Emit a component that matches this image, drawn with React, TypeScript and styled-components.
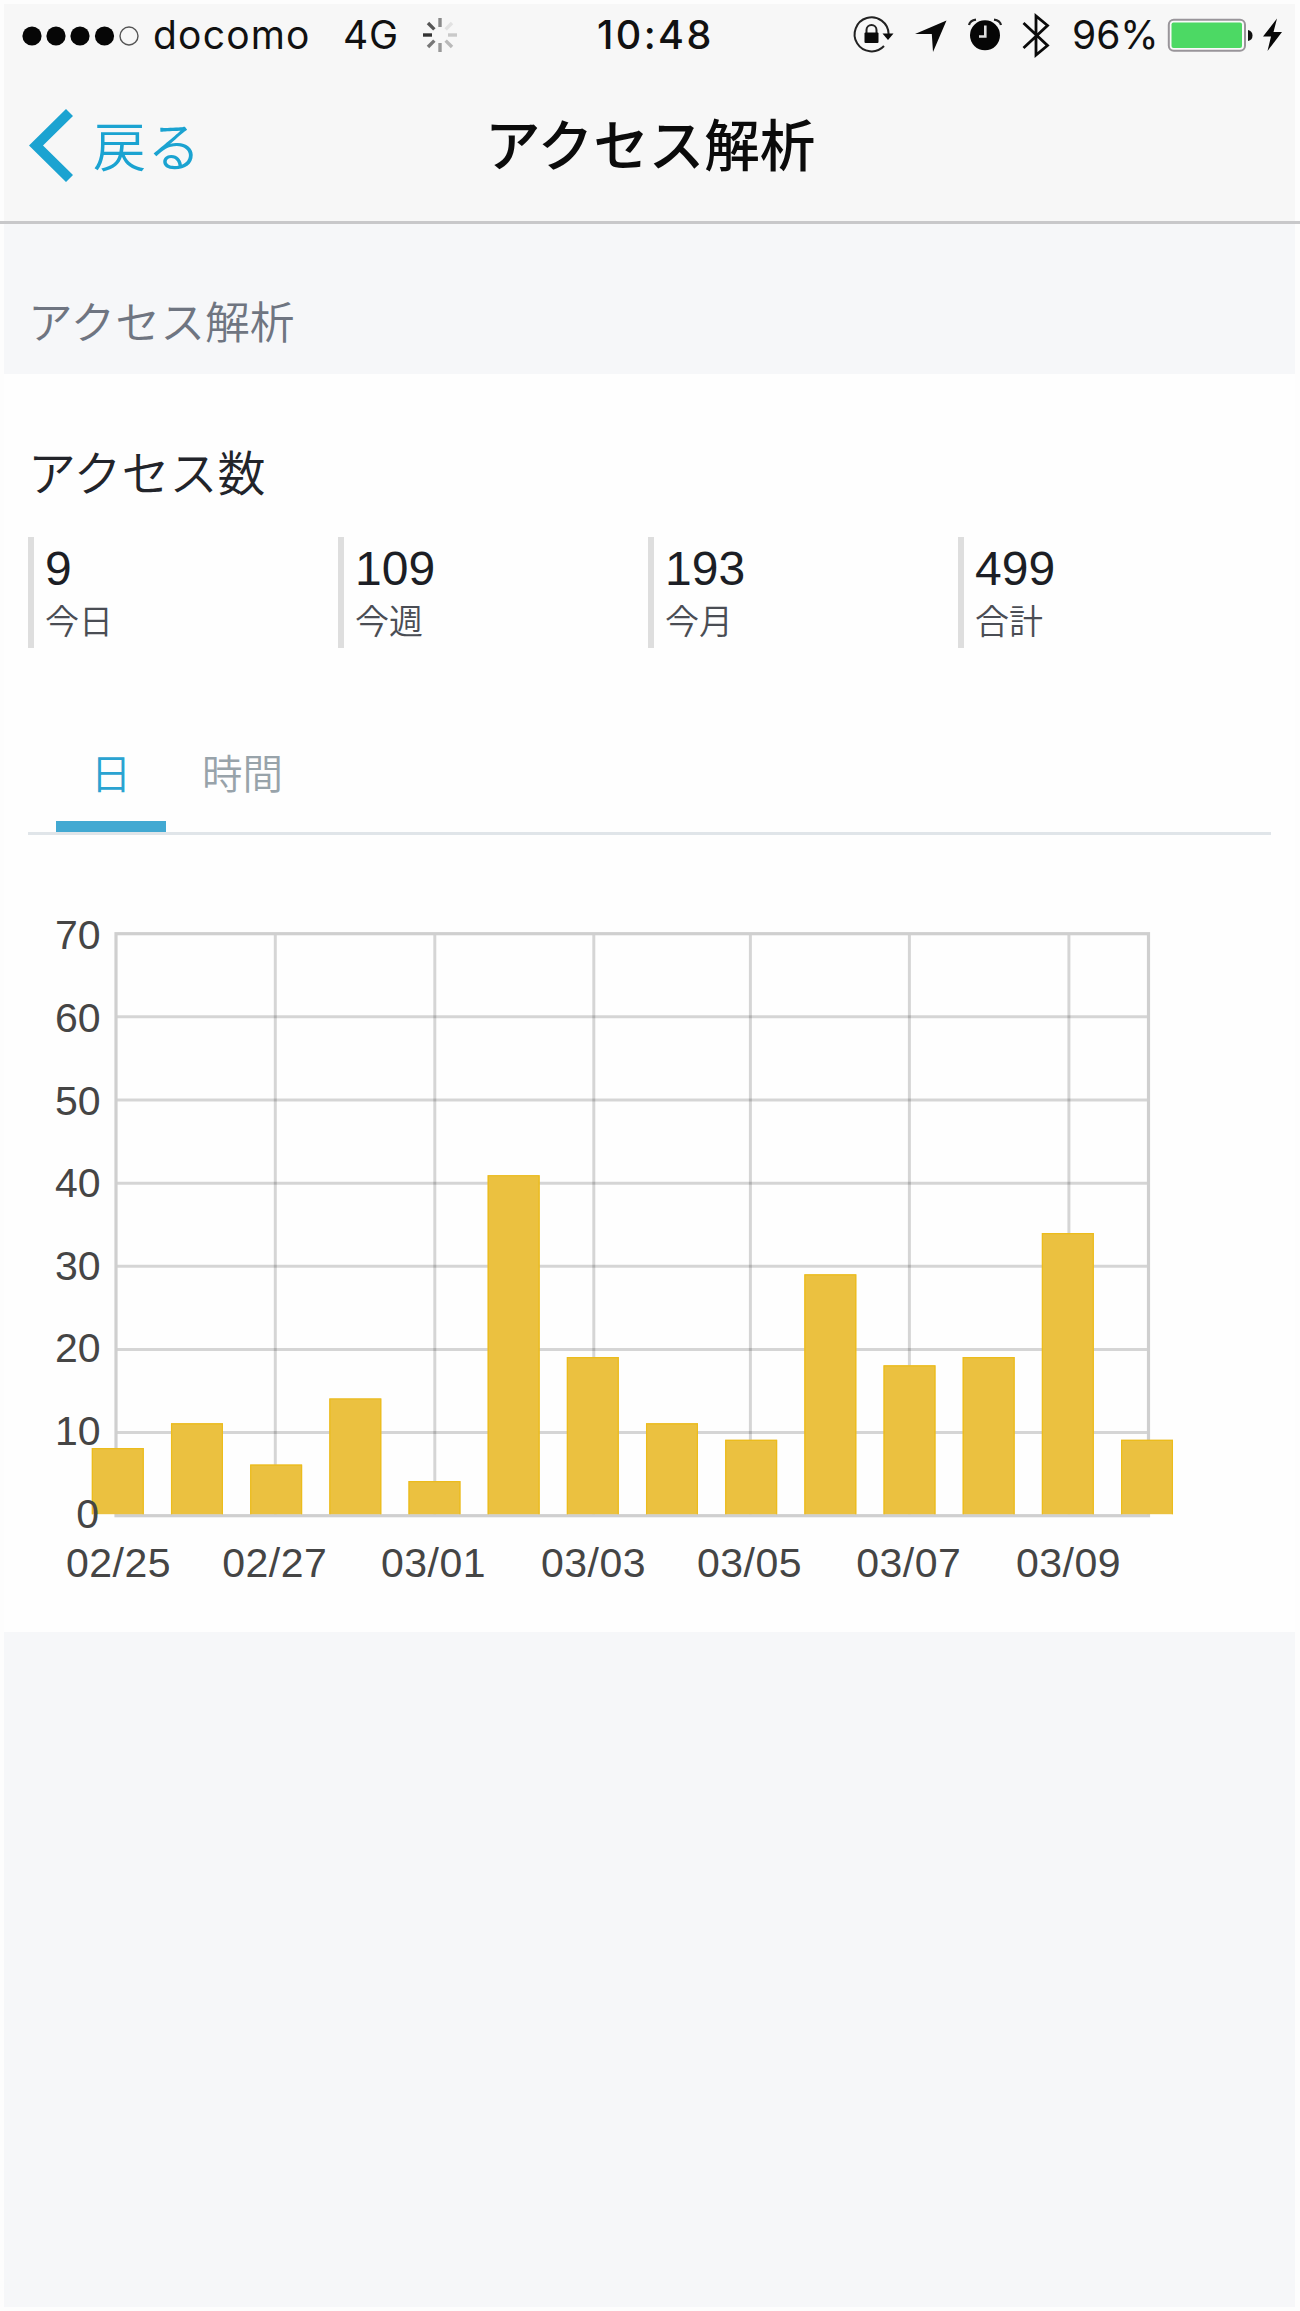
import React from "react";
import styled, { createGlobalStyle } from "styled-components";

const GlobalStyle = createGlobalStyle`
  html, body { margin: 0; padding: 0; background: #fdfdfd; }
  * { box-sizing: border-box; }
`;

const JP = `"Noto Sans CJK JP", sans-serif`;
const LATIN = `"Liberation Sans", Arial, sans-serif`;
const UI = `Inter, "Liberation Sans", sans-serif`;

const Screen = styled.div`
  width: 1300px;
  height: 2311px;
  padding: 4px 5px 4px 4px;
  display: flex;
  flex-direction: column;
  overflow: hidden;
  background: #fdfdfd;
`;

const Header = styled.header`
  flex: none;
  height: 220px;
  margin: 0 -5px 0 -4px;
  padding: 0 5px 0 4px;
  border-bottom: 3px solid #c8c8ca;
  background: linear-gradient(#f7f7f7, #f7f7f7) content-box;
`;

const StatusBar = styled.div`
  height: 62px;
  display: grid;
  grid-template-columns: 586px 130px 1fr;
  align-items: center;
  color: #111;
`;

const StatusSide = styled.div<{ $end?: boolean }>`
  display: flex;
  align-items: center;
  justify-content: ${(p) => (p.$end ? "flex-end" : "flex-start")};
  padding: ${(p) => (p.$end ? "0 13px 0 0" : "0 0 0 18px")};
`;

const StatusText = styled.span<{ $width: number; $size?: number; $spacing?: number; $ml?: number; $weight?: number }>`
  flex: none;
  width: ${(p) => p.$width}px;
  margin-left: ${(p) => p.$ml ?? 0}px;
  font: ${(p) => p.$weight ?? 400} ${(p) => p.$size ?? 39}px/50px ${UI};
  letter-spacing: ${(p) => p.$spacing ?? 0}px;
  white-space: nowrap;
`;

const Glyph = styled.svg<{ $ml?: number }>`
  flex: none;
  display: block;
  overflow: visible;
  margin-left: ${(p) => p.$ml ?? 0}px;
`;

const NavBar = styled.nav`
  height: 155px;
  padding-left: 25px;
  display: grid;
  grid-template-columns: 456px 1fr;
  align-items: start;
`;

const BackButton = styled.a`
  display: flex;
  align-items: flex-start;
  padding-top: 43px;
  color: #1ba3d1;
`;

const BackLabel = styled.span`
  margin: -1px 0 0 20px;
  font: 350 53px/73px ${JP};
  letter-spacing: 1.5px;
`;

const Title = styled.h1`
  margin: 39px 0 0;
  font: 500 55.5px/74px ${JP};
  color: #0b0b0b;
  white-space: nowrap;
`;

const SectionHeader = styled.div`
  flex: none;
  height: 150px;
  padding: 64px 0 0 24px;
  background: #f6f7f9;
  font: 350 44.8px/64px ${JP};
  color: #6f7581;
`;

const Panel = styled.section`
  flex: none;
  height: 1258px;
  padding: 0 24px;
  background: #fefefe;
`;

const PanelTitle = styled.h2`
  margin: 0;
  padding: 62px 0 0;
  height: 163px;
  font: 350 48px/68px ${JP};
  color: #22242a;
`;

const Stats = styled.div`
  display: grid;
  grid-template-columns: repeat(4, 310px);
  height: 111px;
`;

const Stat = styled.div`
  padding: 2px 0 0 11px;
  border-left: 6.5px solid #dedede;
`;

const StatValue = styled.div`
  font: 400 48px/60px ${LATIN};
  color: #1c1e25;
`;

const StatLabel = styled.div`
  margin-top: 1px;
  font: 350 34px/40px ${JP};
  color: #4a4d54;
`;

const Tabs = styled.div`
  display: flex;
  height: 187px;
  padding: 87px 0 0 28px;
  border-bottom: 3px solid #e0e5e9;
`;

const Tab = styled.div<{ $active?: boolean }>`
  width: ${(p) => (p.$active ? 110 : 153)}px;
  height: 97px;
  padding-top: 8px;
  text-align: center;
  font: 350 40.5px/58px ${JP};
  color: ${(p) => (p.$active ? "#2aa3d1" : "#98a3aa")};
  border-bottom: 11px solid ${(p) => (p.$active ? "#42a9d2" : "transparent")};
`;

const ChartSvg = styled.svg`
  display: block;
  margin-left: -28px;
  text {
    font: 400 41px ${LATIN};
    fill: #454545;
  }
`;

const Footer = styled.div`
  flex: 1;
  background: #f6f7f9;
`;

const values = [8, 11, 6, 14, 4, 41, 19, 11, 9, 29, 18, 19, 34, 9];
const yLabels = [70, 60, 50, 40, 30, 20, 10, 0];
const columns = [275.3, 434.8, 593.8, 750.4, 909.4, 1068.9];
const xLabels: [string, number][] = [
  ["02/25", 118.5],
  ["02/27", 274.8],
  ["03/01", 433.5],
  ["03/03", 593.5],
  ["03/05", 749.5],
  ["03/07", 908.8],
  ["03/09", 1068.5],
];

const CHART_TOP = 835;
const FRAME = { left: 116, right: 1148.5, top: 933.7, bottom: 1515.7 };
const GRID_ROW = (FRAME.bottom - FRAME.top) / 7;

function Chart() {
  return (
    <ChartSvg width={1300} height={790} viewBox={`0 ${CHART_TOP} 1300 790`}>
      {[1, 2, 3, 4, 5, 6].map((i) => (
        <path
          key={`h${i}`}
          d={`M${FRAME.left} ${FRAME.top + GRID_ROW * i}H${FRAME.right}`}
          stroke="#000"
          strokeOpacity={0.16}
          strokeWidth={3}
        />
      ))}
      {columns.map((x) => (
        <path
          key={x}
          d={`M${x} ${FRAME.top}V${FRAME.bottom}`}
          stroke="#000"
          strokeOpacity={0.16}
          strokeWidth={3}
        />
      ))}
      <rect
        x={FRAME.left}
        y={FRAME.top}
        width={FRAME.right - FRAME.left}
        height={FRAME.bottom - FRAME.top}
        fill="none"
        stroke="#cfcfcf"
        strokeWidth={3.2}
      />
      {values.map((v, i) => {
        const h = v * 8.27;
        const x = 91.8 + 79.17 * i;
        return (
          <g key={i}>
            <rect x={x} y={1514.2 - h} width={52} height={h} fill="#ebc140" />
            <path
              d={`M${x + 0.6} 1514.2V${1514.8 - h}H${x + 51.4}V1514.2`}
              fill="none"
              stroke="#ecbc1c"
              strokeWidth={1.2}
            />
          </g>
        );
      })}
      {yLabels.map((n, i) => (
        <text key={n} x={n === 0 ? 99 : 100.5} y={949.4 + 82.6 * i} textAnchor="end">
          {n}
        </text>
      ))}
      {xLabels.map(([label, x]) => (
        <text key={label} x={x} y={1576.5} textAnchor="middle" letterSpacing={0.5}>
          {label}
        </text>
      ))}
    </ChartSvg>
  );
}

function SignalDots() {
  return (
    <Glyph width={118} height={22} viewBox="0 0 118 22">
      {[10, 34, 58, 82.5].map((x) => (
        <circle key={x} cx={x} cy={12} r={9.6} fill="#060606" />
      ))}
      <circle cx={107} cy={12} r={9} fill="none" stroke="#555" strokeWidth={1.4} />
    </Glyph>
  );
}

function Spinner() {
  const shades = ["#8a8a8a", "#e2e2e2", "#c9c9c9", "#b9b9b9", "#999", "#777", "#333", "#555"];
  return (
    <Glyph width={36} height={36} viewBox="-18 -18 36 36" $ml={21}>
      {shades.map((c, i) => (
        <path key={i} d="M0 -8V-17" stroke={c} strokeWidth={3.4} transform={`rotate(${i * 45})`} />
      ))}
    </Glyph>
  );
}

function StatusIcons() {
  return (
    <Glyph width={203} height={50} viewBox="850 10 203 50">
      <g fill="none" stroke="#222" strokeWidth={2}>
        <path d="M888.6 34A17 17 0 1 0 884 46" />
        <path d="M866.5 34V30A5 5 0 0 1 876.5 30V34" />
      </g>
      <rect x={864.5} y={32.5} width={14} height={10.5} rx={1} fill="#0a0a0a" />
      <path d="M882.5 33.5H893.5L888 40Z" fill="#0a0a0a" />
      <path d="M946.5 20.5L915 34H931.8L933 52Z" fill="#0a0a0a" />
      <circle cx={985} cy={35.3} r={15} fill="#060606" />
      <path d="M985.3 25.5V36.5H979" fill="none" stroke="#ddd" strokeWidth={2.6} />
      <path d="M969 25Q970 20.5 976 19.6M1001 25Q1000 20.5 994 19.6" fill="none" stroke="#222" strokeWidth={2.2} />
      <path d="M1023.5 23L1047.5 45.5L1036 55V16L1047.5 25.5L1023.5 48" fill="none" stroke="#0a0a0a" strokeWidth={2.8} />
    </Glyph>
  );
}

function Battery() {
  return (
    <Glyph width={115} height={40} viewBox="1167 15 115 40">
      <rect x={1168.8} y={19.8} width={76.2} height={31} rx={5} fill="#fafafa" stroke="#99959a" strokeWidth={2} />
      <rect x={1171.5} y={22.5} width={70.5} height={25.6} rx={2} fill="#4cd964" />
      <path d="M1248 30Q1252.5 31 1252.5 35.5T1248 41Z" fill="#111" />
      <path d="M1277 18.5L1263 36.5H1271L1267.5 51L1282 32H1273.5Z" fill="#080808" />
    </Glyph>
  );
}

export default function App() {
  return (
    <>
      <GlobalStyle />
      <Screen>
        <Header>
          <StatusBar>
            <StatusSide>
              <SignalDots />
              <StatusText $width={160} $ml={13} $spacing={1.2}>docomo</StatusText>
              <StatusText $width={58} $ml={30} $spacing={0.8}>4G</StatusText>
              <Spinner />
            </StatusSide>
            <StatusText $width={130} $ml={7} $weight={500} $size={39.5} $spacing={2.4}>10:48</StatusText>
            <StatusSide $end>
              <StatusIcons />
              <StatusText $width={95} $ml={19}>96%</StatusText>
              <Battery />
            </StatusSide>
          </StatusBar>
          <NavBar>
            <BackButton>
              <Glyph width={44} height={73} viewBox="29 109 44 73">
                <path d="M66 109L73 116L43 145.5L73 175L66 182L29 145.5Z" fill="#1ba3d1" />
              </Glyph>
              <BackLabel>戻る</BackLabel>
            </BackButton>
            <Title>アクセス解析</Title>
          </NavBar>
        </Header>
        <SectionHeader>アクセス解析</SectionHeader>
        <Panel>
          <PanelTitle>アクセス数</PanelTitle>
          <Stats>
            {[
              ["9", "今日"],
              ["109", "今週"],
              ["193", "今月"],
              ["499", "合計"],
            ].map(([value, label]) => (
              <Stat key={label}>
                <StatValue>{value}</StatValue>
                <StatLabel>{label}</StatLabel>
              </Stat>
            ))}
          </Stats>
          <Tabs>
            <Tab $active>日</Tab>
            <Tab>時間</Tab>
          </Tabs>
          <Chart />
        </Panel>
        <Footer />
      </Screen>
    </>
  );
}
